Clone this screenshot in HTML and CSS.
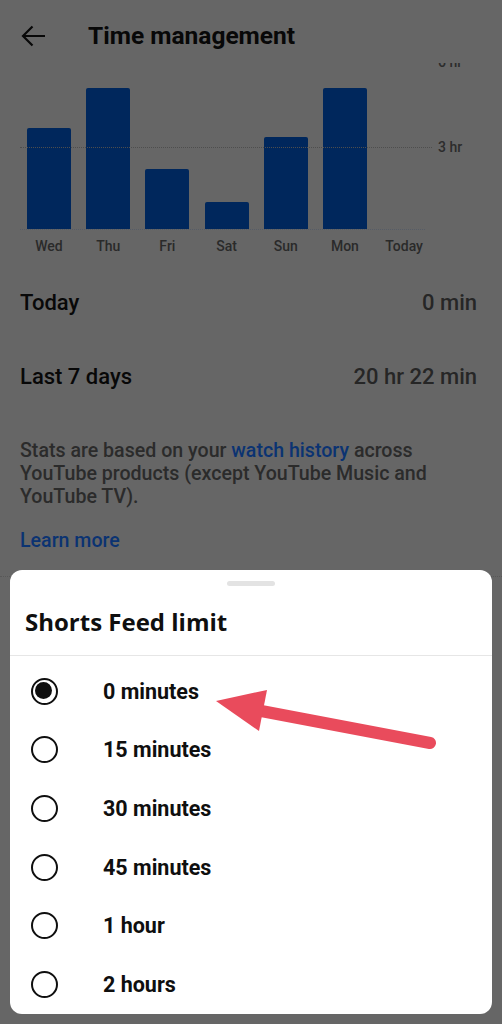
FILE: index.html
```html
<!doctype html>
<html lang="en">
<head>
    <meta charset="UTF-8">
    <meta name="viewport" content="width=device-width, initial-scale=1.0">
    <title>Time management</title>
    <link rel="stylesheet" href="styles.css">
</head>
<body>
<header class="top-bar">
    <svg class="back" width="26" height="24" viewBox="0 0 26 24">
        <path d="M24 12H2 M11.5 2.5 L2 12 L11.5 21.5" fill="none" stroke="#080808" stroke-width="2.2"/>
    </svg>
    <h1>Time management</h1>
</header>

<div class="chart">
    <div class="grid-line" style="top: -1px"></div>
    <div class="grid-line" style="top: 84px"></div>
    <div class="axis-label" style="top: -9px">6 hr</div>
    <div class="axis-label" style="top: 76px">3 hr</div>
    <div class="bars">
        <div class="bar-col"><div class="bar" style="height: 101px"></div></div>
        <div class="bar-col"><div class="bar" style="height: 141px"></div></div>
        <div class="bar-col"><div class="bar" style="height: 60px"></div></div>
        <div class="bar-col"><div class="bar" style="height: 27px"></div></div>
        <div class="bar-col"><div class="bar" style="height: 92px"></div></div>
        <div class="bar-col"><div class="bar" style="height: 141px"></div></div>
        <div class="bar-col"></div>
    </div>
    <div class="days">
        <span>Wed</span>
        <span>Thu</span>
        <span>Fri</span>
        <span>Sat</span>
        <span>Sun</span>
        <span>Mon</span>
        <span>Today</span>
    </div>
</div>

<div class="stat-row">
    <span>Today</span>
    <span class="stat-value">0 min</span>
</div>
<div class="stat-row">
    <span>Last 7 days</span>
    <span class="stat-value">20 hr 22 min</span>
</div>

<p class="note">Stats are based on your <a href="#">watch history</a> across YouTube products (except YouTube Music and YouTube TV).</p>
<a class="learn-more" href="#">Learn more</a>
<div class="page-divider"></div>

<div class="sheet">
    <div class="handle"></div>
    <h2 class="sheet-title">Shorts Feed limit</h2>
    <div class="options">
        <label class="option"><span class="radio checked"></span>0 minutes</label>
        <label class="option"><span class="radio"></span>15 minutes</label>
        <label class="option"><span class="radio"></span>30 minutes</label>
        <label class="option"><span class="radio"></span>45 minutes</label>
        <label class="option"><span class="radio"></span>1 hour</label>
        <label class="option"><span class="radio"></span>2 hours</label>
    </div>
</div>

<svg class="pointer" width="502" height="1024" viewBox="0 0 502 1024">
    <line x1="256" y1="710" x2="430" y2="743" stroke="#e94b5c" stroke-width="12" stroke-linecap="round"/>
    <polygon points="216,701 267,690 259,731" fill="#e94b5c"/>
</svg>
</body>
</html>
```

FILE: styles.css
```css
html, body {
    margin: 0;
    height: 1024px;
    overflow: hidden;
}
body {
    font-family: Roboto, "Liberation Sans", sans-serif;
    background-color: #666666;
    color: #080808;
    position: relative;
}
a {
    text-decoration: none;
    color: #0b3372;
}
.top-bar {
    display: flex;
    align-items: center;
    height: 63px;
    box-sizing: border-box;
    padding: 9px 0 0 21px;
    position: relative;
    z-index: 1;
    background-color: #666666;
}
.top-bar h1 {
    margin: 0 0 0 41px;
    font-size: 24.5px;
    font-weight: 700;
    line-height: 54px;
}

/* chart */
.chart {
    position: relative;
    height: 202px;
}
.grid-line {
    position: absolute;
    left: 20px;
    width: 412px;
    border-top: 1px dotted #4e4e4e;
}
.axis-label {
    position: absolute;
    left: 438px;
    font-size: 14px;
    font-weight: 500;
    line-height: 16px;
    color: #2c2c2c;
}
.bars {
    display: flex;
    align-items: flex-end;
    gap: 15.2px;
    width: 405px;
    height: 167px;
    box-sizing: border-box;
    margin-left: 20px;
    padding-left: 7px;
    border-bottom: 1px dotted #565c66;
}
.bar-col {
    width: 44px;
    flex: none;
}
.bar {
    background-color: #00275c;
    border-radius: 2px 2px 0 0;
}
.days {
    display: flex;
    gap: 15.2px;
    margin-left: 27px;
    height: 35px;
    line-height: 33px;
    font-size: 14px;
    font-weight: 500;
    color: #2a2a2a;
}
.days span {
    width: 44px;
    flex: none;
    text-align: center;
    white-space: nowrap;
}

/* totals */
.stat-row {
    display: flex;
    justify-content: space-between;
    align-items: center;
    height: 74px;
    padding: 0 25px 0 20px;
    font-size: 22px;
    font-weight: 500;
}
.stat-value {
    color: #262626;
}
.note {
    margin: 26px 25px 0 20px;
    font-size: 19.6px;
    font-weight: 500;
    line-height: 23px;
    color: #2b2b2b;
}
.learn-more {
    display: block;
    margin: 21px 0 0 20px;
    font-size: 19.6px;
    font-weight: 500;
    line-height: 23px;
    width: max-content;
}
.page-divider {
    margin-top: 24px;
    border-top: 1px dotted #585858;
}

/* bottom sheet */
.sheet {
    position: absolute;
    top: 570px;
    left: 10px;
    right: 10px;
    background-color: #fff;
    border-radius: 12px;
    padding-top: 11px;
}
.handle {
    width: 48px;
    height: 5px;
    margin: 0 auto;
    border-radius: 3px;
    background-color: #e3e3e3;
}
.sheet-title {
    margin: 0;
    padding: 21px 15px 18px;
    font-family: "Open Sans", Lato, sans-serif;
    font-size: 24px;
    font-weight: 700;
    line-height: 30px;
    color: #0f0f0f;
    border-bottom: 1px solid #e6e6e6;
}
.options {
    padding-top: 6px;
}
.option {
    display: flex;
    align-items: center;
    height: 58.6px;
    padding-left: 21px;
    font-size: 21.5px;
    font-weight: 700;
    color: #0f0f0f;
}
.radio {
    width: 27px;
    height: 27px;
    box-sizing: border-box;
    border: 2.6px solid #0f0f0f;
    border-radius: 50%;
    margin-right: 45px;
    flex: none;
    position: relative;
}
.radio.checked::after {
    content: "";
    position: absolute;
    top: 2.4px;
    left: 2.4px;
    width: 17px;
    height: 17px;
    border-radius: 50%;
    background-color: #0f0f0f;
}
.pointer {
    position: absolute;
    top: 0;
    left: 0;
    pointer-events: none;
}
```
